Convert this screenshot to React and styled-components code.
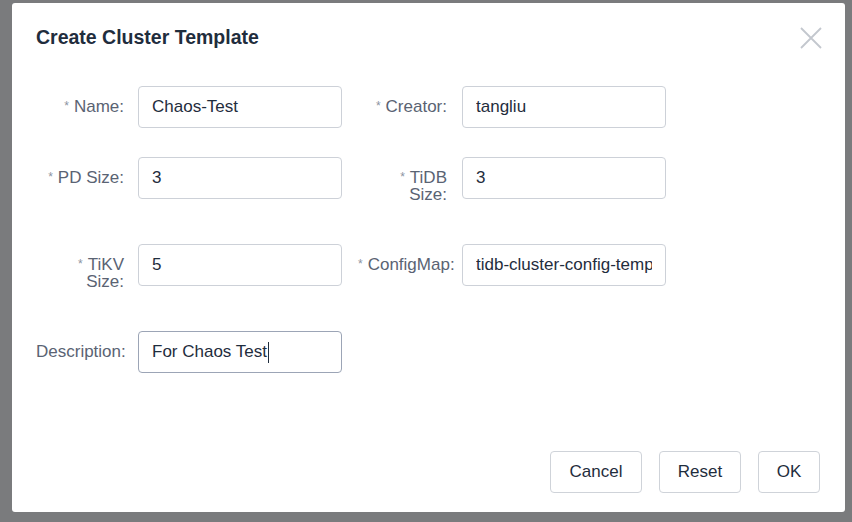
import React from "react";
import styled, { createGlobalStyle } from "styled-components";

const GlobalStyle = createGlobalStyle`
  html, body {
    margin: 0;
    padding: 0;
    background: #7a7b7d;
    font-family: "Liberation Sans", Arial, Helvetica, sans-serif;
  }
`;

const Backdrop = styled.div`
  width: 852px;
  height: 522px;
  padding: 3px 0 0 12px;
  box-sizing: border-box;
  background: #7a7b7d;
  overflow: hidden;
`;

const Modal = styled.div`
  width: 833px;
  height: 509px;
  background: #fff;
  border-radius: 3px;
  display: flex;
  flex-direction: column;
  box-sizing: border-box;
`;

const Header = styled.div`
  display: flex;
  align-items: center;
  justify-content: space-between;
  padding: 24px 23px 0 24px;
  height: 21px;
  box-sizing: content-box;
`;

const Title = styled.h3`
  margin: 0;
  font-size: 19.5px;
  line-height: 21px;
  font-weight: 700;
  color: #1f2d3d;
`;

const CloseButton = styled.button`
  width: 22px;
  height: 22px;
  padding: 0;
  border: none;
  background: transparent;
  display: flex;
  cursor: pointer;
`;

const Form = styled.div`
  margin-top: 38px;
  padding: 0 24px;
  display: flex;
  flex-direction: column;
  gap: 29px;
`;

const Row = styled.div`
  display: flex;
  align-items: flex-start;
`;

const Item = styled.div`
  display: flex;
  align-items: flex-start;
`;

const Label = styled.label`
  width: ${(p) => (p.second ? "120px" : "102px")};
  padding: 12px ${(p) => (p.second ? "15px" : "14px")} 12px
    ${(p) => (p.second ? "16px" : "0")};
  box-sizing: border-box;
  text-align: right;
  white-space: nowrap;
  font-size: 17px;
  line-height: 17px;
  color: #5a6373;
`;

const Star = styled.span`
  font-size: 12px;
  color: #8b93a1;
  margin-right: 5px;
  vertical-align: 2px;
`;

const Field = styled.div`
  width: 204px;
  height: 42px;
  box-sizing: border-box;
  border: 1px solid ${(p) => (p.focused ? "#9ca5b6" : "#cdd1d8")};
  border-radius: 4px;
  padding: 0 13px;
  display: flex;
  align-items: center;
  background: #fff;
`;

const FieldText = styled.span`
  flex: 1;
  overflow: hidden;
  white-space: nowrap;
  font-size: 17px;
  color: #1f2d3d;
  display: flex;
  align-items: center;
`;

const Caret = styled.span`
  display: inline-block;
  width: 1px;
  height: 21px;
  background: #1f2d3d;
  margin-left: 1px;
`;

const Footer = styled.div`
  margin-top: auto;
  padding: 0 25px 19px;
  display: flex;
  justify-content: flex-end;
  gap: 17px;
`;

const Button = styled.button`
  width: ${(p) => p.w}px;
  height: 42px;
  padding: 0;
  border: 1px solid #cfd3d9;
  border-radius: 4px;
  background: #fff;
  font-family: inherit;
  font-size: 17px;
  color: #1f2d3d;
  cursor: pointer;
`;

function FormItem({ label, required, second, value, focused }) {
  return (
    <Item>
      <Label second={second}>
        {required && <Star>*</Star>}
        {label}
      </Label>
      <Field focused={focused}>
        <FieldText>
          {value}
          {focused && <Caret />}
        </FieldText>
      </Field>
    </Item>
  );
}

export default function App() {
  return (
    <>
      <GlobalStyle />
      <Backdrop>
        <Modal>
          <Header>
            <Title>Create Cluster Template</Title>
            <CloseButton aria-label="Close">
              <svg width="22" height="22" viewBox="0 0 22 22">
                <path
                  d="M1 1 L21 21 M21 1 L1 21"
                  stroke="#c3c7ce"
                  strokeWidth="1.8"
                  fill="none"
                />
              </svg>
            </CloseButton>
          </Header>
          <Form>
            <Row>
              <FormItem required label="Name:" value="Chaos-Test" />
              <FormItem required second label="Creator:" value="tangliu" />
            </Row>
            <Row>
              <FormItem required label="PD Size:" value="3" />
              <FormItem
                required
                second
                label={<>TiDB<br />Size:</>}
                value="3"
              />
            </Row>
            <Row>
              <FormItem required label={<>TiKV<br />Size:</>} value="5" />
              <FormItem
                required
                second
                label="ConfigMap:"
                value="tidb-cluster-config-template"
              />
            </Row>
            <Row>
              <FormItem label="Description:" value="For Chaos Test" focused />
            </Row>
          </Form>
          <Footer>
            <Button w={92}>Cancel</Button>
            <Button w={82}>Reset</Button>
            <Button w={62}>OK</Button>
          </Footer>
        </Modal>
      </Backdrop>
    </>
  );
}
